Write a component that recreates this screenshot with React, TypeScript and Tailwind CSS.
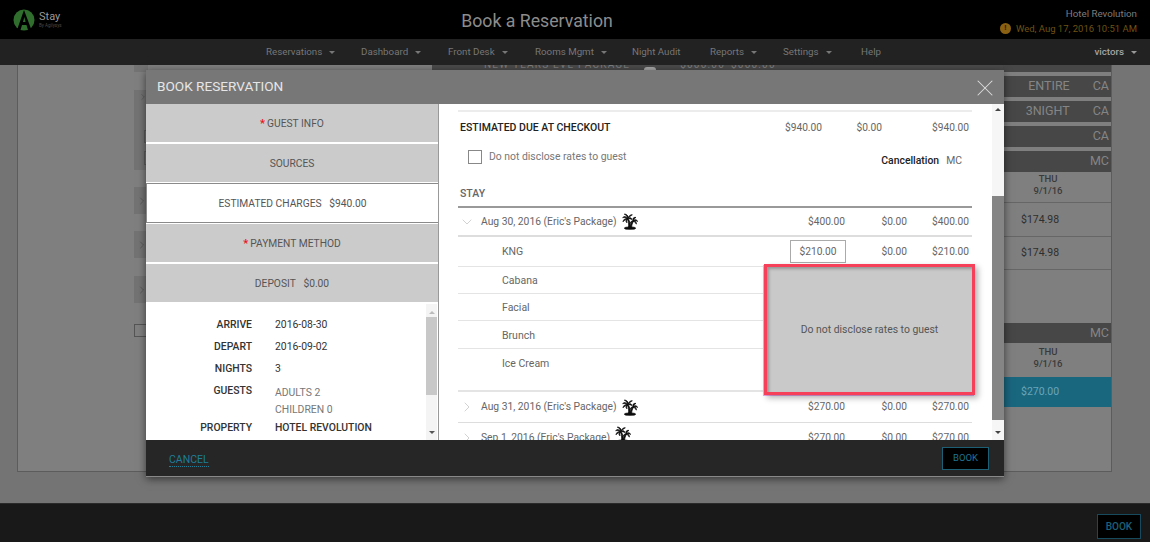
import { ChevronDown, ChevronRight, X } from "lucide-react";

const navItems = [
  { label: "Reservations", caret: true, w: "w-[95px]" },
  { label: "Dashboard", caret: true, w: "w-[87px]" },
  { label: "Front Desk", caret: true, w: "w-[87px]" },
  { label: "Rooms Mgmt", caret: true, w: "w-[97px]" },
  { label: "Night Audit", caret: false, w: "w-[78px]" },
  { label: "Reports", caret: true, w: "w-[73px]" },
  { label: "Settings", caret: true, w: "w-[78px]" },
  { label: "Help", caret: false, w: "w-[40px]" },
];

function Palm({ className = "" }: { className?: string }) {
  return (
    <svg className={className} width="16" height="17" viewBox="0 0 24 25" fill="#0c0c0c" stroke="#0c0c0c" strokeWidth="1.1" strokeLinejoin="round">
      <ellipse cx="12" cy="22.5" rx="8.5" ry="1.8" />
      <path d="M9.5 21.5 C10.5 17 10 12 7.5 8.5 L9 8 C11.5 11 12.5 16 12.5 21.5 Z" />
      <path d="M11.5 21.5 C12.5 18 14 14 16.5 11 L17.8 11.8 C15.5 14.5 14.5 18 14.5 21.5 Z" />
      <path d="M8 8.5 C6 4.5 3 4 1 7 C3 6 5.5 6.5 8 8.5 Z" />
      <path d="M8 8.5 C5 7.5 2 9 1.5 13 C3.5 10.5 5.5 9.5 8 8.5 Z" />
      <path d="M8 8.5 C8 5 6.5 2.5 3.5 1.5 C5.5 1 9.5 3 9.5 7 C10.5 4 12.5 2 15.5 2.5 C13 3.5 11 6 8 8.5 Z" />
      <path d="M8 8.5 C10.5 6 14 6 15 9.5 C13 8.5 11 8 8 8.5 Z" />
      <path d="M8 8.5 C7 10 6.5 12 7.5 14.5 C5.5 13 5 10.5 8 8.5 Z" />
      <path d="M17 11.5 C15 8.5 17.5 5.5 21 6.5 C19 7 18 9 17 11.5 Z" />
      <path d="M17 11.5 C19 9 22 9 23.5 12.5 C22 11.5 20 11 17 11.5 Z" />
      <path d="M17 11.5 C19.5 11.5 22 13 21.5 16.5 C20.5 14.5 19 12.5 17 11.5 Z" />
      <path d="M17 11.5 C15 11 12.5 12.5 12.5 15.5 C14 13.5 15.5 12.5 17 11.5 Z" />
    </svg>
  );
}

function Caret({ className = "border-t-[#777]" }: { className?: string }) {
  return <span className={`ml-[7px] inline-block h-0 w-0 border-x-[3px] border-t-[3px] border-x-transparent ${className}`} />;
}

function BgBar({ left, right, h = "h-[21px]" }: { left?: string; right: string; h?: string }) {
  return (
    <div className={`flex ${h} items-center justify-end bg-[#474747] pr-[2px] text-[12.5px] text-[#858585]`}>
      {left && <span className="mr-[23px]">{left}</span>}
      <span>{right}</span>
    </div>
  );
}

function SideBlock({ h, mt }: { h: string; mt: string }) {
  return (
    <div className={`flex items-center justify-end bg-[#737373] ${h} ${mt}`}>
      <ChevronRight className="text-[#4c4c4c]" size={12} strokeWidth={1.2} />
    </div>
  );
}

function Tab({ children, req, active }: { children: React.ReactNode; req?: boolean; active?: boolean }) {
  return (
    <div
      className={`flex items-center justify-center pt-[2px] text-[10.25px] text-[#555] ${
        active ? "-my-px h-[40px] border border-r-0 border-[#8a8a8a] bg-white" : "h-[38px] bg-[#cbcbcb]"
      }`}
    >
      {req && <span className="mr-[2px] text-[11px] font-bold text-[#e8141c]">*</span>}
      {children}
    </div>
  );
}

function Detail({ label, children, className = "h-[22px]" }: { label: string; children: React.ReactNode; className?: string }) {
  return (
    <div className={`flex text-[10.4px] ${className}`}>
      <div className="w-[106px] text-right font-medium text-[#333]">{label}</div>
      <div className="ml-[23px] text-[#333]">{children}</div>
    </div>
  );
}

function Amounts({ a, b, c }: { a: string; b: string; c: string }) {
  return (
    <>
      <span className="absolute right-[127px] text-[10.2px] text-[#666]">{a}</span>
      <span className="absolute right-[65px] text-[10.2px] text-[#666]">{b}</span>
      <span className="absolute right-[3px] text-[10.2px] text-[#666]">{c}</span>
    </>
  );
}

function StayRow({ open, date, iconClass = "" }: { open?: boolean; date: string; iconClass?: string }) {
  return (
    <div className={`relative flex items-center text-[10.3px] text-[#666] ${open ? "h-[29px] border-b-2 border-[#ddd]" : "h-[31px] border-b border-[#ddd]"}`}>
      {open ? (
        <ChevronDown className="ml-[1px] text-[#bbb]" size={16} strokeWidth={1} />
      ) : (
        <ChevronRight className="ml-[1px] text-[#bbb]" size={16} strokeWidth={1} />
      )}
      <span className="ml-[6px]">{date}</span>
      <Palm className={`ml-[5px] ${iconClass}`} />
      <Amounts a={open ? "$400.00" : "$270.00"} b="$0.00" c={open ? "$400.00" : "$270.00"} />
    </div>
  );
}

function Sub({ label, h = "h-[27px]" }: { label: string; h?: string }) {
  return (
    <div className={`flex ${h} items-center border-b border-[#e4e4e4] pl-[44px] pt-[2px] text-[10.5px] text-[#666]`}>{label}</div>
  );
}

export default function App() {
  return (
    <div className="relative flex h-[542px] w-[1150px] flex-col overflow-hidden bg-black font-['Roboto',sans-serif]">
      {/* top header */}
      <header className="relative flex h-[39px] shrink-0 items-center bg-black">
        <div className="ml-[13px] flex items-center">
          <svg width="22" height="22" viewBox="0 0 22 22">
            <circle cx="11" cy="11" r="10.5" fill="#2f6e2c" />
            <path d="M11 1 L4 21 H7.5 L9 16 H13.5 L15 21 H18.5 Z M10 13 L11.3 8 L12.6 13 Z" fill="#000" fillRule="evenodd" />
          </svg>
          <div className="ml-[4px] flex flex-col leading-none">
            <span className="text-[11px] text-[#9a9a9a]">Stay</span>
            <span className="mt-[2px] text-[4.5px] text-[#4a4a4a]">By Agilysys</span>
          </div>
        </div>
        <h1 className="absolute left-0 right-[76px] pt-[3px] text-center text-[17.7px] font-normal text-[#8c8c8c]">Book a Reservation</h1>
        <div className="ml-auto mr-[13px] flex flex-col items-end pt-[4px] leading-none">
          <span className="text-[9.75px] text-[#7d7d7d]">Hotel Revolution</span>
          <div className="mt-[4px] flex items-center text-[9.5px] text-[#6e5213]">
            <span className="mr-[5px] flex h-[11px] w-[11px] items-center justify-center rounded-full bg-[#8a6112] text-[8px] font-bold text-[#2a1f08]">!</span>
            Wed, Aug 17, 2016 10:51 AM
          </div>
        </div>
      </header>

      {/* nav */}
      <nav className="flex h-[26px] shrink-0 items-center bg-[#222] pl-[266px] text-[9.75px] text-[#777]">
        {navItems.map((n) => (
          <div key={n.label} className={`flex items-center ${n.w}`}>
            {n.label}
            {n.caret && <Caret />}
          </div>
        ))}
        <div className="ml-auto mr-[13px] flex items-center font-medium text-[#a5a5a5]">
          victors
          <Caret className="border-t-[#999]" />
        </div>
      </nav>

      {/* dimmed page */}
      <main className="flex min-h-0 flex-1 bg-[#747474] pb-[31px] pl-[2px] pr-[38px]">
        <div className="ml-[15px] flex flex-1 border-b border-l border-r border-[#5c5c5c] bg-[#7f7f7f]">
          {/* row ends showing left of the modal */}
          <div className="ml-[116px] flex w-[14px] shrink-0 flex-col">
            <div className="h-[7px] bg-[#737373]" />
            <div className="relative mt-[18px] flex h-[80px] flex-col items-end bg-[#737373] pt-[2px]">
              <ChevronRight className="text-[#4c4c4c]" size={10} strokeWidth={1.2} />
              <div className="mt-[28px] h-[13px] w-[4px] border border-r-0 border-[#5c5c5c]" />
              <div className="mt-[8px] h-[14px] w-[4px] border border-r-0 border-[#5c5c5c]" />
            </div>
            <SideBlock h="h-[27px]" mt="mt-[17px]" />
            <SideBlock h="h-[27px]" mt="mt-[17px]" />
            <SideBlock h="h-[27px]" mt="mt-[18px]" />
            <div className="mt-[21px] h-[13px] w-[14px] border border-[#555]" />
          </div>
          <div className="min-w-0 flex-1">
            <div className="ml-[284px] flex h-[5px] overflow-hidden bg-[#4a4a4a] pl-[52px] text-[10px] leading-[10px] tracking-[1.2px] text-[#7d7d7d]">
              <div className="-mt-[5px] flex h-[10px] whitespace-nowrap">
                <span>NEW YEARS EVE PACKAGE</span>
                <span className="ml-[14px] mt-[7px] h-[3px] w-[12px] rounded-t-full bg-[#a8a8a8]" />
                <span className="ml-[24px]">$000.00</span>
                <span className="ml-[6px]">$000.00</span>
              </div>
            </div>
          </div>
          {/* right rate column */}
          <div className="flex w-[108px] shrink-0 flex-col">
            <div className="mb-[4px] h-[7px] bg-[#474747]" />
            <div className="flex flex-col gap-[4px]">
              <BgBar left="ENTIRE" right="CA" />
              <BgBar left="3NIGHT" right="CA" />
              <BgBar right="CA" />
              <BgBar right="MC" />
            </div>
            <div className="mt-[1px] flex h-[29px] flex-col items-center pr-[18px] text-[9.5px] font-medium leading-[12px] text-[#3a3a3a]">
              <span>THU</span>
              <span>9/1/16</span>
            </div>
            <div className="flex h-[34px] items-center border-t border-[#666] pl-[18px] text-[10.5px] text-[#2e2e2e]">$174.98</div>
            <div className="flex h-[34px] items-center border-b border-t border-[#666] pl-[18px] text-[10.5px] text-[#2e2e2e]">$174.98</div>
            <div className="h-[53px]" />
            <BgBar right="MC" h="h-[20px]" />
            <div className="flex h-[34px] flex-col items-center pr-[18px] pt-[3px] text-[9.5px] font-medium leading-[12px] text-[#3a3a3a]">
              <span>THU</span>
              <span>9/1/16</span>
            </div>
            <div className="flex h-[30px] items-center bg-[#19677f] pl-[18px] text-[10.5px] text-[#6aa6b8]">$270.00</div>
          </div>
        </div>
      </main>

      {/* page footer */}
      <footer className="flex h-[39px] shrink-0 items-end justify-end border-t border-[#2a2a2a] bg-[#191919] pb-[3px] pr-[9px]">
        <button className="flex h-[25px] w-[44px] items-center justify-center border border-[#174a5c] bg-black text-[10px] font-medium text-[#1d6079]">BOOK</button>
      </footer>

      {/* modal */}
      <div className="absolute left-[146px] top-[70px] flex h-[407px] w-[858px] flex-col shadow-[0_2px_8px_rgba(0,0,0,0.55)]">
        <div className="flex h-[34px] shrink-0 items-center justify-between bg-[#777] pl-[11px] pr-[5px]">
          <span className="-mt-[2px] text-[13.6px] font-normal text-[#e6e6e6]">BOOK RESERVATION</span>
          <X className="mt-[1px] text-[#dcdcdc]" size={28} strokeWidth={0.9} />
        </div>
        <div className="flex min-h-0 flex-1 bg-white">
          {/* left column */}
          <div className="flex w-[293px] shrink-0 flex-col border-r border-[#999]">
            <div className="flex flex-col gap-[2px]">
              <Tab req>GUEST INFO</Tab>
              <Tab>SOURCES</Tab>
              <Tab active>ESTIMATED CHARGES&nbsp;&nbsp;&nbsp;$940.00</Tab>
              <Tab req>PAYMENT METHOD</Tab>
              <Tab>DEPOSIT&nbsp;&nbsp;&nbsp;$0.00</Tab>
            </div>
            <div className="relative min-h-0 flex-1 overflow-hidden pt-[15px]">
              <Detail label="ARRIVE">2016-08-30</Detail>
              <Detail label="DEPART">2016-09-02</Detail>
              <Detail label="NIGHTS">3</Detail>
              <Detail label="GUESTS" className="h-[37px]">
                <div className="mt-[1px] leading-[17px] text-[#777]">
                  ADULTS 2
                  <br />
                  CHILDREN 0
                </div>
              </Detail>
              <Detail label="PROPERTY">
                <span className="font-medium">HOTEL REVOLUTION</span>
              </Detail>
              <div className="absolute bottom-0 right-[1px] top-[2px] flex w-[11px] flex-col items-center bg-[#f4f4f4]">
                <div className="mt-[7px] h-0 w-0 border-x-[3px] border-b-[3px] border-x-transparent border-b-[#bbb]" />
                <div className="mt-[3px] h-[78px] w-full bg-[#c8c8c8]" />
                <div className="mb-[6px] mt-auto h-0 w-0 border-x-[3px] border-t-[3px] border-x-transparent border-t-[#555]" />
              </div>
            </div>
          </div>

          {/* right column */}
          <div className="relative min-h-0 flex-1 overflow-hidden">
            <div className="ml-[19px] mr-[32px] mt-[6px]">
              <div className="relative flex h-[34px] items-center border-t-2 border-[#ececec] pl-[2px] text-[10.5px]">
                <span className="font-medium text-[#222]">ESTIMATED DUE AT CHECKOUT</span>
                <span className="absolute right-[150px] text-[10.2px] text-[#666]">$940.00</span>
                <span className="absolute right-[90px] text-[10.2px] text-[#666]">$0.00</span>
                <span className="absolute right-[3px] text-[10.2px] text-[#666]">$940.00</span>
              </div>
              <div className="relative flex h-[25px] items-center pl-[10px] text-[10.4px] text-[#777]">
                <span className="mr-[7px] h-[14px] w-[14px] border border-[#888]" />
                Do not disclose rates to guest
                <span className="absolute right-[10px] top-[9px] text-[#222]">
                  <span className="font-medium">Cancellation</span>
                  <span className="ml-[7px] text-[#666]">MC</span>
                </span>
              </div>
              <div className="flex h-[39px] items-end border-b-2 border-[#999] pb-[4px] pl-[2px] text-[10.5px] font-medium text-[#666]">STAY</div>
              <StayRow open date="Aug 30, 2016 (Eric's Package)" />
              <div className="relative flex h-[30px] items-center border-b border-[#e4e4e4] pl-[44px] text-[10.5px] text-[#666]">
                KNG
                <span className="absolute right-[126px] flex h-[23px] w-[56px] items-center justify-center border border-[#aaa] text-[10.2px] text-[#666]">$210.00</span>
                <span className="absolute right-[65px] text-[10.2px] text-[#666]">$0.00</span>
                <span className="absolute right-[3px] text-[10.2px] text-[#666]">$210.00</span>
              </div>
              <Sub label="Cabana" />
              <Sub label="Facial" />
              <Sub label="Brunch" h="h-[28px]" />
              <div className="h-[43px] border-b-2 border-[#e4e4e4] pl-[44px] pt-[7px] text-[10.5px] text-[#666]">Ice Cream</div>
              <StayRow date="Aug 31, 2016 (Eric's Package)" />
              <StayRow date="Sep 1, 2016 (Eric's Package)" iconClass="-translate-y-[4px]" />
            </div>
            <div className="absolute bottom-0 right-0 top-0 flex w-[12px] flex-col items-center bg-[#f6f6f6]">
              <div className="mt-[4px] h-0 w-0 border-x-[3px] border-b-[3px] border-x-transparent border-b-[#444]" />
              <div className="mt-[85px] h-[224px] w-full bg-[#858585]" />
              <div className="mt-[11px] h-0 w-0 border-x-[3px] border-t-[3px] border-x-transparent border-t-[#444]" />
            </div>
          </div>
        </div>
        <div className="flex h-[37px] shrink-0 items-center justify-between border-b border-[#888] bg-[#262626] pl-[23px] pr-[15px]">
          <span className="mt-[3px] border-b border-dotted border-[#1f7d98] text-[10.5px] leading-[13px] text-[#1f7d98]">CANCEL</span>
          <button className="flex h-[23px] w-[47px] items-center justify-center border border-[#1d5f75] bg-black text-[9.5px] text-[#1f7391]">BOOK</button>
        </div>
      </div>

      {/* annotation */}
      <div className="absolute left-[764px] top-[264px] flex h-[131px] w-[211px] items-center justify-center border-[3px] border-[#f6405a] bg-[#c9c9c9] text-[10.4px] text-[#555] shadow-[inset_2px_2px_3px_rgba(0,0,0,0.25),3px_3px_6px_rgba(0,0,0,0.3),-1px_1px_0_#eeaaee]">
        Do not disclose rates to guest
      </div>
    </div>
  );
}
